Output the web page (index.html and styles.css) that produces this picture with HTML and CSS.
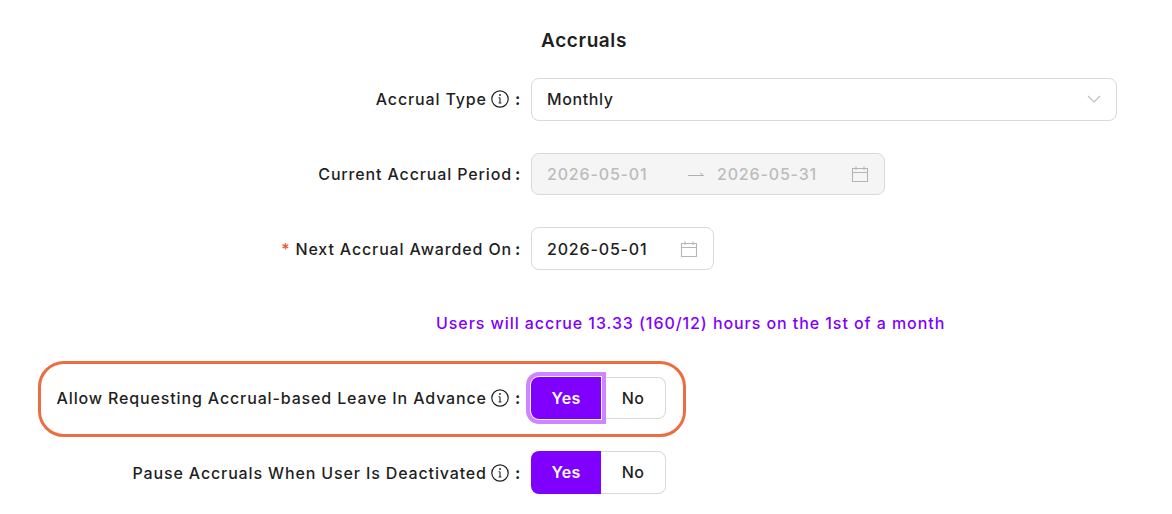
FILE: index.html
```html
<!DOCTYPE html>
<html lang="en">
<head>
<meta charset="utf-8">
<title>Accruals</title>
<link rel="stylesheet" href="styles.css">
</head>
<body>
<svg class="defs" width="0" height="0" aria-hidden="true">
  <symbol id="info" viewBox="0 0 18 18"><circle cx="9" cy="9" r="8.2" fill="none" stroke="currentColor" stroke-width="1.2"/><path d="M9 7.8v5.2M7.6 7.8H9M7.6 13h2.8" fill="none" stroke="currentColor" stroke-width="1.1"/><circle cx="9" cy="5" r="0.9" fill="currentColor"/></symbol>
  <symbol id="cal" viewBox="0 0 18 18"><path d="M1.5 3.5h15v13h-15zM1.5 7.5h15M5 1.5v3.5M13 1.5v3.5" fill="none" stroke="currentColor" stroke-width="1.1"/></symbol>
</svg>
<main class="page">
  <h2 class="title">Accruals</h2>
  <div class="row">
    <div class="label">Accrual Type <svg class="info"><use href="#info"/></svg><span class="colon">:</span></div>
    <div class="select">Monthly
      <svg class="chev" viewBox="0 0 14 8"><path d="M1 1l6 6 6-6" fill="none" stroke="currentColor" stroke-width="1.1"/></svg>
    </div>
  </div>
  <div class="row">
    <div class="label">Current Accrual Period<span class="colon tight">:</span></div>
    <div class="date range disabled">
      <span class="d">2026-05-01</span>
      <svg class="arrow" viewBox="0 0 16 6"><path d="M0 4.5h15.5L12 2" fill="none" stroke="currentColor" stroke-width="1"/></svg>
      <span class="d">2026-05-31</span>
      <svg class="cal"><use href="#cal"/></svg>
    </div>
  </div>
  <div class="row">
    <div class="label"><span class="req">*</span>Next Accrual Awarded On<span class="colon tight">:</span></div>
    <div class="date single">
      <span class="d">2026-05-01</span>
      <svg class="cal"><use href="#cal"/></svg>
    </div>
  </div>
  <div class="row">
    <div class="label empty"></div>
    <p class="note">Users will accrue 13.33 (160/12) hours on the 1st of a month</p>
  </div>
  <div class="row highlighted">
    <div class="mark"></div>
    <div class="label">Allow Requesting Accrual-based Leave In Advance <svg class="info"><use href="#info"/></svg><span class="colon">:</span></div>
    <div class="toggle">
      <span class="opt yes focus">Yes</span>
      <span class="opt no">No</span>
    </div>
  </div>
  <div class="row">
    <div class="label">Pause Accruals When User Is Deactivated <svg class="info"><use href="#info"/></svg><span class="colon">:</span></div>
    <div class="toggle">
      <span class="opt yes">Yes</span>
      <span class="opt no">No</span>
    </div>
  </div>
</main>
</body>
</html>
```
FILE: styles.css
```css
* { box-sizing: border-box; }
html, body { margin: 0; padding: 0; background: #fff; overflow: hidden; }
body {
  font-family: "Inter", "Noto Sans", sans-serif;
  font-weight: 500;
  color: #1f1f1f;
  font-size: 16px;
  letter-spacing: 0.86px;
  height: 514px;
}
.defs { position: absolute; }
.page {
  width: 1172px;
  padding: 28px 55px 0 0;
  display: flex;
  flex-direction: column;
  gap: 32px;
}
.title {
  margin: 0 0 -8px;
  height: 26px;
  line-height: 26px;
  font-size: 19px;
  font-weight: 600;
  letter-spacing: 0.6px;
  text-align: center;
  width: 1168px;
}
.row {
  display: flex;
  align-items: center;
  gap: 10px;
  height: 42.7px;
  position: relative;
}
.label {
  width: 521px;
  flex: none;
  display: flex;
  justify-content: flex-end;
  align-items: center;
  white-space: pre;
}
.info { width: 18px; height: 18px; margin-left: -1px; color: #222; }
.colon { margin-left: 6px; font-weight: 700; width: 6px; letter-spacing: 0; }
.colon.tight { margin-left: 3px; }
.req { color: #f0522d; margin-right: 5px; }
.select, .date {
  height: 42.7px;
  border: 1px solid #d9d9d9;
  border-radius: 8px;
  display: flex;
  align-items: center;
  padding: 0 15px;
  background: #fff;
}
.select { flex: 1; justify-content: space-between; letter-spacing: 0.6px; }
.chev { width: 14px; height: 8px; color: #bdbdbd; }
.d { width: 100px; white-space: nowrap; letter-spacing: 0.84px; }
.cal { width: 18px; height: 18px; color: #b5b5b5; }
.date.single { width: 183px; justify-content: space-between; }
.date.range { width: 354px; }
.range .arrow { width: 16px; height: 6px; margin: 0 13px 0 41px; color: #b0b0b0; }
.range .cal { margin-left: 34px; }
.disabled { background: #f5f5f5; color: #bcbcbc; }
.note {
  margin: 0 0 0 -95px;
  color: #8000ff;
  letter-spacing: 0.93px;
}
.toggle { display: flex; height: 42.7px; }
.opt {
  display: flex;
  align-items: center;
  justify-content: center;
  padding-bottom: 1px;
  font-weight: 600;
  letter-spacing: 0.3px;
}
.yes {
  width: 70px;
  background: #8000ff;
  color: #fff;
  border-radius: 8px 0 0 8px;
}
.no {
  width: 65px;
  border: 1px solid #d9d9d9;
  border-left: 0;
  border-radius: 0 8px 8px 0;
  font-weight: 500;
}
.focus {
  position: relative;
  box-shadow: 0 0 0 1px #fff, 0 0 0 5px #cf85ff;
  border-radius: 8px 0 0 8px;
}
.mark {
  position: absolute;
  left: 38px;
  top: -16px;
  width: 648px;
  height: 76px;
  border: 3px solid #ec6d42;
  border-radius: 26px;
  pointer-events: none;
}
```
